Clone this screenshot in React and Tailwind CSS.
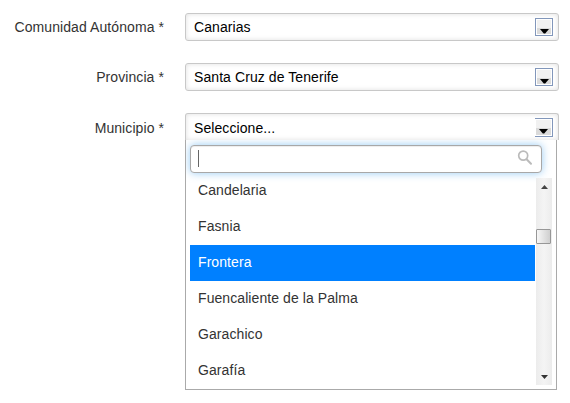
const municipalities = [
  'Candelaria',
  'Fasnia',
  'Frontera',
  'Fuencaliente de la Palma',
  'Garachico',
  'Garafía',
];

function ArrowButton({ open }) {
  return (
    <span
      className={
        'flex w-[18px] flex-col border border-[#8297bb] bg-white ' +
        (open ? 'h-[19px] border-l-0 p-px' : 'h-[18px] p-px')
      }
    >
      <span className="flex h-full w-full flex-col">
        <span className="h-2 shrink-0 bg-[#f1f1f1]" />
        <span
          className={
            'flex flex-1 items-start bg-[#dadada] pt-px ' + (open ? 'pl-[3px]' : 'justify-center')
          }
        >
          <svg width="9" height="5" viewBox="0 0 9 5" className="shrink-0">
            <path d="M0 0H9L5.2 4.4H3.8Z" fill="#000" />
          </svg>
        </span>
      </span>
    </span>
  );
}

function Select({ value, open }) {
  return (
    <div
      className={
        'flex w-[374px] items-start justify-between border border-[#c8c8c8] pt-1 pr-[5px] pl-2 text-black shadow-[inset_0_0_5px_rgba(0,0,0,0.13)] ' +
        (open ? 'h-[27px] rounded-t-[3px] border-b-0' : 'h-7 rounded-[3px]')
      }
    >
      <span className={'leading-[18px] ' + (open ? 'pt-px' : '')}>{value}</span>
      <ArrowButton open={open} />
    </div>
  );
}

function Field({ label, lowered, children }) {
  return (
    <div className="flex items-start gap-[21px]">
      <label
        className={
          'w-[164px] shrink-0 text-right whitespace-nowrap text-[#333] ' +
          (lowered ? 'leading-[30px]' : 'leading-7')
        }
      >
        {label} *
      </label>
      <div>{children}</div>
    </div>
  );
}

function Scrollbar() {
  return (
    <div className="flex h-[207px] w-4 flex-col items-center bg-gradient-to-r from-[#ececec] via-[#f4f4f4] to-[#ececec]">
      <svg width="7" height="4" viewBox="0 0 7 4" className="mt-[7px]">
        <path d="M0 4H7L3.5 0Z" fill="#444" />
      </svg>
      <div className="mt-10 h-[15px] w-[15px] self-start rounded-[1px] border border-[#979797] bg-gradient-to-r from-[#f7f7f7] to-[#cfcfcf]" />
      <svg width="7" height="4" viewBox="0 0 7 4" className="mt-auto mb-[6px]">
        <path d="M0 0H7L3.5 4Z" fill="#333" />
      </svg>
    </div>
  );
}

function Dropdown() {
  return (
    <div className="h-[250px] w-[372px] overflow-hidden border border-t-0 border-[#aaa] bg-white pt-[5px] pl-1">
      <div className="flex h-7 w-[352px] items-start justify-between rounded-[4px] border border-[#a8a8a8] bg-white pt-1 pr-2 pl-[7px] shadow-[inset_0_1px_1px_rgba(0,0,0,0.075),0_0_9px_rgba(82,168,236,0.6)]">
        <span className="h-[17px] w-px bg-[#666]" />
        <svg width="16" height="16" viewBox="0 0 16 16" fill="none" stroke="#bbb">
          <circle cx="6.2" cy="5.6" r="4.5" strokeWidth="1.7" />
          <path d="M9.6 9.2L14 13.8" strokeWidth="2" strokeLinecap="round" />
        </svg>
      </div>
      <div className="mt-[5px] flex h-[207px] gap-px">
        <ul className="-mt-[5px] w-[345px] text-[#333]">
          {municipalities.map((name) => (
            <li
              key={name}
              className={
                'h-9 pl-2 leading-[35px] ' + (name === 'Frontera' ? 'bg-[#0080ff] text-white' : '')
              }
            >
              {name}
            </li>
          ))}
        </ul>
        <Scrollbar />
      </div>
    </div>
  );
}

export default function App() {
  return (
    <main className="flex h-[403px] w-[570px] flex-col gap-[22px] overflow-hidden bg-white pt-[13px] font-['Liberation_Sans',Arial,sans-serif] text-[14px] tracking-[0.08px]">
      <Field label="Comunidad Autónoma">
        <Select value="Canarias" />
      </Field>
      <Field label="Provincia">
        <Select value="Santa Cruz de Tenerife" />
      </Field>
      <Field label="Municipio" lowered>
        <Select value="Seleccione..." open />
        <Dropdown />
      </Field>
    </main>
  );
}
